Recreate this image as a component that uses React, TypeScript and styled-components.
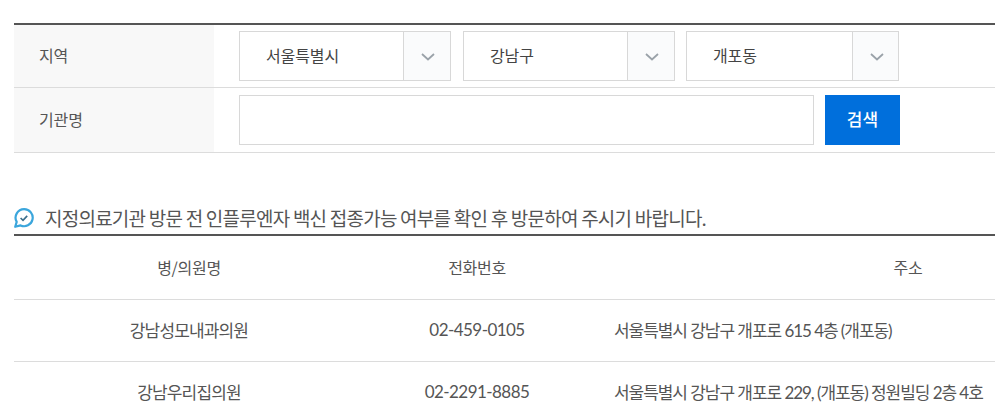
import React from "react";
import styled, { createGlobalStyle } from "styled-components";

const GlobalStyle = createGlobalStyle`
  html, body {
    margin: 0;
    padding: 0;
    height: 417px;
    overflow: hidden;
    background: #fff;
    font-family: "Noto Sans CJK KR", "Noto Sans", sans-serif;
    color: #555;
  }
`;

const Page = styled.div`
  padding: 23px 0 0 14px;
  width: 981px;
`;

const SearchForm = styled.div`
  border-top: 2px solid #555;
`;

const FormRow = styled.div<{ $height: number }>`
  display: flex;
  height: ${(p) => p.$height}px;
  border-bottom: 1px solid #dcdcdc;
`;

const FormLabel = styled.div`
  width: 200px;
  flex: none;
  background: #f8f8f8;
  padding: 0 0 3px 25px;
  box-sizing: border-box;
  display: flex;
  align-items: center;
  font-size: 16px;
  letter-spacing: -0.1px;
  color: #555;
`;

const FormBody = styled.div<{ $top: number }>`
  display: flex;
  padding: ${(p) => p.$top}px 0 0 25px;
`;

const SelectBox = styled.div<{ $width: number; $gap: number }>`
  display: flex;
  width: ${(p) => p.$width}px;
  height: 50px;
  margin-right: ${(p) => p.$gap}px;
  border: 1px solid #d8d8d8;
  box-sizing: border-box;
  background: #fff;
`;

const SelectValue = styled.div`
  flex: 1;
  padding: 0 0 3px 26px;
  display: flex;
  align-items: center;
  font-size: 16px;
  letter-spacing: -0.1px;
  color: #444;
`;

const SelectArrow = styled.div<{ $width: number }>`
  width: ${(p) => p.$width}px;
  flex: none;
  box-sizing: border-box;
  border-left: 1px solid #d8d8d8;
  padding: 2px 0 0 2px;
  background: #fafbfc;
  display: flex;
  align-items: center;
  justify-content: center;
`;

const TextInput = styled.input`
  width: 575px;
  height: 50px;
  margin-right: 11px;
  border: 1px solid #d8d8d8;
  box-sizing: border-box;
  background: #fff;
  outline: none;
`;

const SearchButton = styled.button`
  width: 75px;
  height: 50px;
  border: 0;
  padding: 0 0 3px;
  background: #006fdc;
  color: #fff;
  font-family: inherit;
  font-size: 17px;
  font-weight: 500;
`;

const Notice = styled.div`
  display: flex;
  align-items: center;
  box-sizing: border-box;
  height: 26px;
  margin-top: 53px;
  padding-bottom: 3px;
  font-size: 19px;
  letter-spacing: -0.77px;
  color: #555;
  gap: 11px;
  white-space: nowrap;
`;

const ResultTable = styled.table`
  width: 1212px;
  table-layout: fixed;
  border-collapse: collapse;
  border-top: 2px solid #555;
  margin-top: 2px;
`;

const HeadCell = styled.th<{ $width: number }>`
  width: ${(p) => p.$width}px;
  height: 64px;
  padding: 0;
  box-sizing: border-box;
  border-bottom: 1px solid #dcdcdc;
  font-size: 16px;
  font-weight: 400;
  letter-spacing: -0.3px;
  color: #555;
  text-align: center;
`;

const Cell = styled.td`
  height: 62px;
  box-sizing: border-box;
  padding: 0 0 1px;
  border-bottom: 1px solid #dcdcdc;
  font-family: Lato, "Noto Sans CJK KR", sans-serif;
  font-size: 17px;
  letter-spacing: -0.85px;
  color: #555;
  text-align: center;
  white-space: nowrap;
`;

const TelCell = styled(Cell)`
  letter-spacing: -0.55px;
`;

const AddressCell = styled(Cell)`
  padding-left: 24px;
  letter-spacing: -1.05px;
  text-align: left;
`;

const Chevron = () => (
  <svg width="14" height="8" viewBox="0 0 14 8" fill="none">
    <path d="M1 1l6 5.5L13 1" stroke="#9aa2a9" strokeWidth="1.8" />
  </svg>
);

const NoticeIcon = () => (
  <svg width="20" height="20" viewBox="0 0 20 20" fill="none">
    <path
      d="M10.2 1.2a8.5 8.5 0 1 1-3.6 16.2L1.2 18.8l1.5-4.9A8.5 8.5 0 0 1 10.2 1.2z"
      stroke="#3ba6dc"
      strokeWidth="2.2"
      strokeLinejoin="round"
    />
    <path d="M6.6 10l2.4 2.3 4.2-4.4" stroke="#3c6f8c" strokeWidth="1.7" />
  </svg>
);

const selects = [
  { value: "서울특별시", width: 212, gap: 12, arrow: 47 },
  { value: "강남구", width: 212, gap: 11, arrow: 47 },
  { value: "개포동", width: 213, gap: 0, arrow: 46 },
];

const rows = [
  { name: "강남성모내과의원", tel: "02-459-0105", address: "서울특별시 강남구 개포로 615 4층 (개포동)" },
  { name: "강남우리집의원", tel: "02-2291-8885", address: "서울특별시 강남구 개포로 229, (개포동) 정원빌딩 2층 4호" },
];

export default function App() {
  return (
    <Page>
      <GlobalStyle />
      <SearchForm>
        <FormRow $height={62}>
          <FormLabel>지역</FormLabel>
          <FormBody $top={6}>
            {selects.map((s) => (
              <SelectBox key={s.value} $width={s.width} $gap={s.gap}>
                <SelectValue>{s.value}</SelectValue>
                <SelectArrow $width={s.arrow}>
                  <Chevron />
                </SelectArrow>
              </SelectBox>
            ))}
          </FormBody>
        </FormRow>
        <FormRow $height={64}>
          <FormLabel>기관명</FormLabel>
          <FormBody $top={7}>
            <TextInput />
            <SearchButton>검색</SearchButton>
          </FormBody>
        </FormRow>
      </SearchForm>
      <Notice>
        <NoticeIcon />
        지정의료기관 방문 전 인플루엔자 백신 접종가능 여부를 확인 후 방문하여 주시기 바랍니다.
      </Notice>
      <ResultTable>
        <thead>
          <tr>
            <HeadCell $width={350}>병/의원명</HeadCell>
            <HeadCell $width={226}>전화번호</HeadCell>
            <HeadCell $width={636}>주소</HeadCell>
          </tr>
        </thead>
        <tbody>
          {rows.map((r) => (
            <tr key={r.tel}>
              <Cell>{r.name}</Cell>
              <TelCell>{r.tel}</TelCell>
              <AddressCell>{r.address}</AddressCell>
            </tr>
          ))}
        </tbody>
      </ResultTable>
    </Page>
  );
}
